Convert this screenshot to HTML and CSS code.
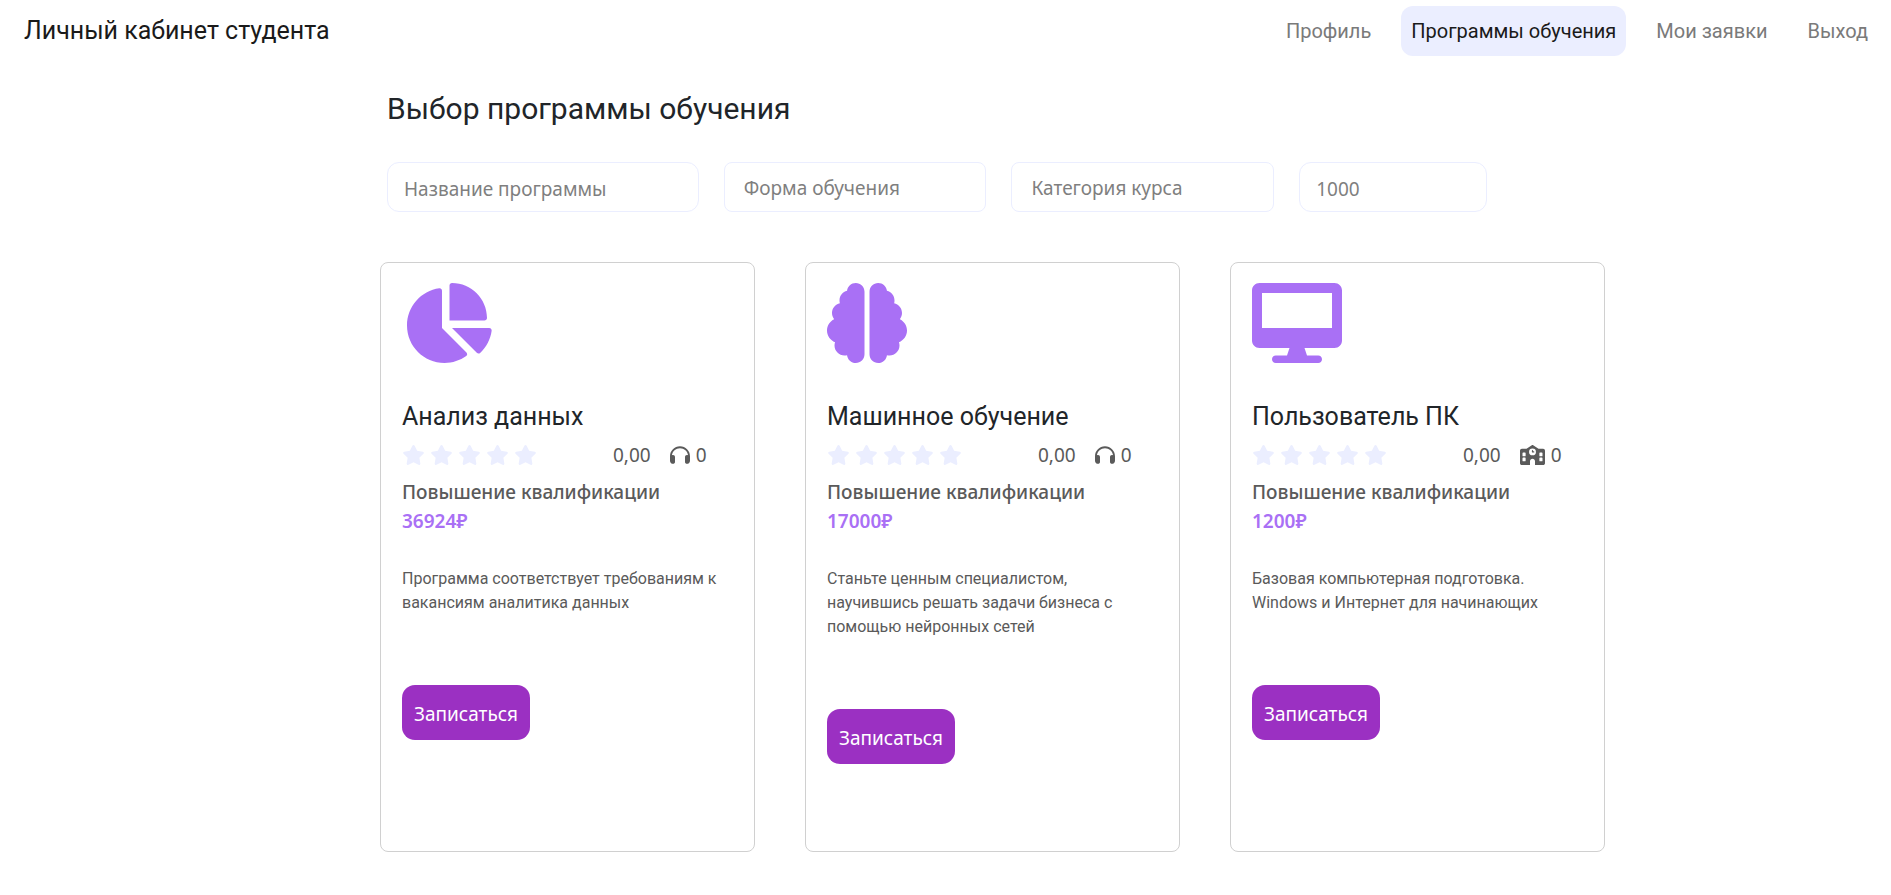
FILE: index.html
```html
<!DOCTYPE html>
<html lang="ru">
<head>
<meta charset="utf-8">
<meta name="viewport" content="width=device-width, initial-scale=1">
<title>Личный кабинет студента</title>
<link rel="stylesheet" href="styles.css">
</head>
<body>
<svg class="sprite" aria-hidden="true">
  <symbol id="star" viewBox="0 0 576 512"><path d="M316.9 18C311.6 7 300.4 0 288.1 0s-23.4 7-28.8 18L195 150.3 51.4 171.5c-12 1.8-22 10.2-25.7 21.7s-.7 24.2 7.9 32.7L137.8 329 113.2 474.7c-2 12 3 24.2 12.9 31.3s23 8 33.8 2.3l128.3-68.5 128.3 68.5c10.8 5.7 23.9 4.9 33.8-2.3s14.9-19.3 12.9-31.3L438.5 329 542.7 225.9c8.6-8.5 11.7-21.2 7.9-32.7s-13.7-19.9-25.7-21.7L381.2 150.3 316.9 18z"/></symbol>
  <symbol id="headphones" viewBox="0 0 512 512"><path d="M256 80C149.9 80 62.4 159.4 49.6 262c9.4-3.8 19.6-6 30.4-6c26.5 0 48 21.5 48 48V432c0 26.5-21.5 48-48 48c-44.2 0-80-35.8-80-80V288C0 146.6 114.6 32 256 32s256 114.6 256 256v112c0 44.2-35.8 80-80 80c-26.5 0-48-21.5-48-48V304c0-26.5 21.5-48 48-48c10.8 0 21 2.1 30.4 6C449.6 159.4 362.1 80 256 80z"/></symbol>
  <symbol id="school" viewBox="0 0 640 512"><path fill-rule="evenodd" d="M337.8 5.4C327-1.8 313-1.8 302.2 5.4L166.3 96H48C21.5 96 0 117.5 0 144V464c0 26.5 21.5 48 48 48H256V416c0-35.3 28.7-64 64-64s64 28.7 64 64v96H592c26.5 0 48-21.5 48-48V144c0-26.5-21.5-48-48-48H473.7L337.8 5.4zM80 192h48c8.800 0 16 7.200 16 16v64c0 8.800-7.200 16-16 16H80c-8.800 0-16-7.200-16-16V208c0-8.800 7.200-16 16-16zm416 16c0-8.800 7.200-16 16-16h48c8.800 0 16 7.200 16 16v64c0 8.800-7.200 16-16 16H512c-8.800 0-16-7.200-16-16V208zM80 320h48c8.800 0 16 7.200 16 16v64c0 8.800-7.200 16-16 16H80c-8.800 0-16-7.200-16-16V336c0-8.800 7.200-16 16-16zm416 16c0-8.800 7.200-16 16-16h48c8.800 0 16 7.200 16 16v64c0 8.800-7.200 16-16 16H512c-8.800 0-16-7.200-16-16V336zM232 176a88 88 0 1 1 176 0 88 88 0 1 1 -176 0zm88-48c-8.800 0-16 7.200-16 16v32c0 8.800 7.200 16 16 16h32c8.800 0 16-7.200 16-16s-7.200-16-16-16H336V144c0-8.800-7.200-16-16-16z"/></symbol>
</svg>

<header class="topbar">
  <a class="brand" href="#">Личный кабинет студента</a>
  <nav class="nav">
    <a class="nav-link" href="#">Профиль</a>
    <a class="nav-link nav-link-active" href="#" aria-current="page">Программы обучения</a>
    <a class="nav-link" href="#">Мои заявки</a>
    <a class="nav-link" href="#">Выход</a>
  </nav>
</header>

<main class="content">
  <h1 class="page-title">Выбор программы обучения</h1>

  <form class="filters">
    <input class="field field-text" type="text" aria-label="Название программы" placeholder="Название программы">
    <select class="field field-select" aria-label="Форма обучения"><option>Форма обучения</option></select>
    <select class="field field-select" aria-label="Категория курса"><option>Категория курса</option></select>
    <input class="field field-text" type="text" aria-label="Цена" placeholder="1000">
  </form>

  <section class="cards">
    <article class="card">
      <svg class="card-icon" viewBox="0 0 576 512" aria-hidden="true"><path d="M304 240V16.600c0-9 7-16.600 16-16.600C443.700 0 544 100.300 544 224c0 9-7.600 16-16.600 16H304zM32 272C32 150.700 122.100 50.300 239 34.300c9.200-1.300 17 6.100 17 15.400V288L412.500 444.500c6.700 6.700 6.200 17.700-1.500 23.100C371.800 495.600 323.800 512 272 512C139.500 512 32 404.600 32 272zm526.400 16c9.300 0 16.600 7.800 15.400 17c-7.700 55.900-34.600 105.600-73.900 142.300c-6 5.600-15.400 5.200-21.200-.7L320 288H558.400z"/></svg>
      <h2 class="card-title">Анализ данных</h2>
      <div class="meta">
        <div class="stars">
          <svg class="star"><use href="#star"/></svg><svg class="star"><use href="#star"/></svg><svg class="star"><use href="#star"/></svg><svg class="star"><use href="#star"/></svg><svg class="star"><use href="#star"/></svg>
        </div>
        <span class="score">0,00</span>
        <span class="count"><svg class="icon-headphones"><use href="#headphones"/></svg>0</span>
      </div>
      <p class="kind">Повышение квалификации</p>
      <p class="price">36924₽</p>
      <p class="about">Программа соответствует требованиям к вакансиям аналитика данных</p>
      <button class="enroll" type="button">Записаться</button>
    </article>

    <article class="card">
      <svg class="card-icon card-icon-square" viewBox="0 0 512 512" aria-hidden="true"><path d="M184 0c30.900 0 56 25.100 56 56V456c0 30.900-25.100 56-56 56c-28.900 0-52.700-21.900-55.700-50.100c-5.200 1.400-10.700 2.100-16.300 2.100c-35.300 0-64-28.700-64-64c0-7.400 1.300-14.600 3.600-21.200C21.400 367.400 0 338.200 0 304c0-31.900 18.700-59.500 45.800-72.300C37.100 220.800 32 207 32 192c0-30.700 21.600-56.300 50.400-62.600C80.800 123.900 80 118 80 112c0-29.900 20.600-55.100 48.300-62.100C131.300 21.900 155.100 0 184 0zM328 0c28.900 0 52.600 21.900 55.700 49.900c27.800 7 48.300 32.100 48.300 62.100c0 6-.8 11.900-2.400 17.400c28.800 6.200 50.400 31.900 50.400 62.600c0 15-5.100 28.800-13.800 39.700C493.300 244.500 512 272.100 512 304c0 34.200-21.400 63.400-51.600 74.800c2.300 6.600 3.600 13.800 3.600 21.200c0 35.300-28.700 64-64 64c-5.600 0-11.100-.7-16.300-2.100c-3 28.200-26.800 50.100-55.700 50.100c-30.900 0-56-25.100-56-56V56c0-30.900 25.100-56 56-56z"/></svg>
      <h2 class="card-title">Машинное обучение</h2>
      <div class="meta">
        <div class="stars">
          <svg class="star"><use href="#star"/></svg><svg class="star"><use href="#star"/></svg><svg class="star"><use href="#star"/></svg><svg class="star"><use href="#star"/></svg><svg class="star"><use href="#star"/></svg>
        </div>
        <span class="score">0,00</span>
        <span class="count"><svg class="icon-headphones"><use href="#headphones"/></svg>0</span>
      </div>
      <p class="kind">Повышение квалификации</p>
      <p class="price">17000₽</p>
      <p class="about">Станьте ценным специалистом, научившись решать задачи бизнеса с помощью нейронных сетей</p>
      <button class="enroll" type="button">Записаться</button>
    </article>

    <article class="card">
      <svg class="card-icon" viewBox="0 0 576 512" aria-hidden="true"><path fill-rule="evenodd" d="M528 0h-480C21.500 0 0 21.500 0 48v320C0 394.500 21.500 416 48 416h192L224 464H152C138.800 464 128 474.800 128 488S138.800 512 152 512h272c13.250 0 24-10.750 24-24s-10.750-24-24-24H352L336 416h192c26.500 0 48-21.500 48-48v-320C576 21.500 554.500 0 528 0zM512 288H64V64h448V288z"/></svg>
      <h2 class="card-title">Пользователь ПК</h2>
      <div class="meta">
        <div class="stars">
          <svg class="star"><use href="#star"/></svg><svg class="star"><use href="#star"/></svg><svg class="star"><use href="#star"/></svg><svg class="star"><use href="#star"/></svg><svg class="star"><use href="#star"/></svg>
        </div>
        <span class="score">0,00</span>
        <span class="count"><svg class="icon-school"><use href="#school"/></svg>0</span>
      </div>
      <p class="kind">Повышение квалификации</p>
      <p class="price">1200₽</p>
      <p class="about">Базовая компьютерная подготовка. Windows и Интернет для начинающих</p>
      <button class="enroll" type="button">Записаться</button>
    </article>
  </section>
</main>
</body>
</html>
```
FILE: styles.css
```css
*,
*::before,
*::after {
  box-sizing: border-box;
}

body {
  margin: 0;
  background: #fff;
  color: #212529;
  font-family: Roboto, "Liberation Sans", sans-serif;
  font-size: 16px;
  line-height: 24px;
}

h1,
h2,
p {
  margin: 0;
  font-weight: 400;
}

.sprite {
  display: none;
}

.topbar {
  display: flex;
  align-items: center;
  justify-content: space-between;
  padding: 6px 13px 0 24px;
}

.brand {
  color: #1a1a1a;
  font-size: 25px;
  line-height: 50px;
  text-decoration: none;
}

.nav {
  display: flex;
  gap: 20px;
}

.nav-link {
  padding: 0 10px;
  border-radius: 12px;
  color: #7a7a7a;
  font-size: 20px;
  line-height: 50px;
  text-decoration: none;
}

.nav-link-active {
  background: #ebeeff;
  color: #1a1a1a;
}

.content {
  margin: 35px 286px 43px 380px;
}

.page-title {
  padding-left: 7px;
  font-size: 30px;
  line-height: 36px;
}

.filters {
  display: grid;
  grid-template-columns: 312fr 263fr 263fr 188fr;
  gap: 25px;
  padding: 35px 118px 0 7px;
}

.field {
  width: 100%;
  min-width: 0;
  height: 50px;
  border: 1px solid #ebeeff;
  background: #fff;
  color: #7f7f7f;
  font-family: "Noto Sans", "Open Sans", sans-serif;
  font-size: 19px;
  line-height: 26px;
}

.field::placeholder {
  color: #7f7f7f;
  opacity: 1;
}

.field-text {
  padding: 4px 16px 0;
  border-radius: 12px;
}

.field-select {
  padding: 2px 19px 0;
  border-radius: 8px;
  appearance: none;
}

.cards {
  display: grid;
  grid-template-columns: repeat(3, 1fr);
  gap: 50px;
  margin-top: 50px;
}

.card {
  min-height: 590px;
  padding: 20px 20px 20px 21px;
  border: 1px solid #d0d0d0;
  border-radius: 8px;
}

.card-icon {
  display: block;
  width: 90px;
  height: 80px;
  fill: #a970f5;
}

.card-icon-square {
  width: 80px;
}

.card-title {
  margin-top: 39px;
  font-size: 25px;
  line-height: 30px;
}

.meta {
  display: flex;
  align-items: center;
  height: 30px;
  margin-top: 8px;
  color: #5a5a5a;
  font-family: "Noto Sans", "Open Sans", sans-serif;
  font-size: 19px;
  line-height: 30px;
}

.stars {
  display: flex;
  gap: 5px;
  width: 211px;
}

.star {
  width: 23px;
  height: 20px;
  fill: #ebeeff;
}

.count {
  display: flex;
  align-items: center;
  gap: 6px;
  margin-left: 19px;
}

.icon-headphones,
.icon-school {
  width: 20px;
  height: 20px;
  fill: #5a5a5a;
}

.icon-school {
  width: 25px;
}

.kind,
.price {
  color: #5a5a5a;
  font-family: "Noto Sans", "Open Sans", sans-serif;
  font-size: 19px;
  font-weight: 500;
  line-height: 29px;
}

.kind {
  margin-top: 8px;
}

.price {
  color: #a970f5;
  font-weight: 600;
}

.about {
  margin-top: 31px;
  color: #5a5a5a;
}

.enroll {
  height: 55px;
  margin-top: 70px;
  padding: 3px 12px 0;
  border: 0;
  border-radius: 13px;
  background: #9b30c2;
  color: #fff;
  font-family: "Noto Sans", "Open Sans", sans-serif;
  font-size: 19px;
  line-height: 26px;
}
```
